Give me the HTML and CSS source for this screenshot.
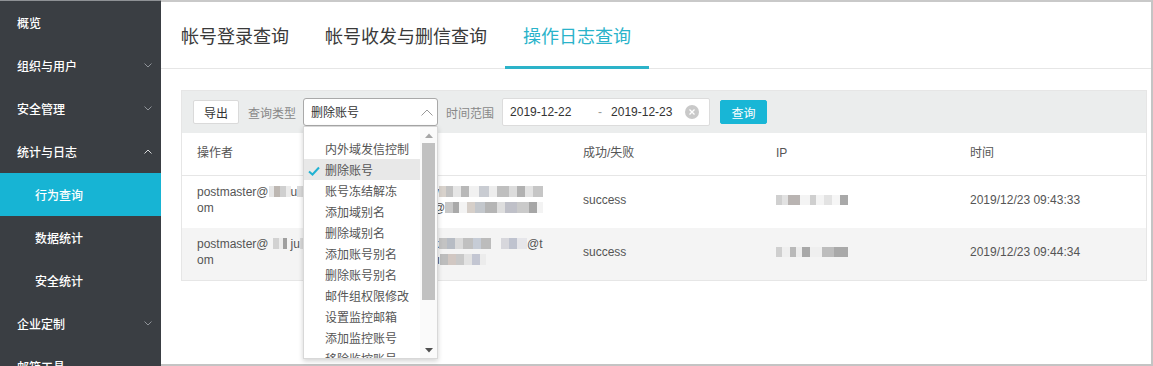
FILE: index.html
```html
<!DOCTYPE html>
<html lang="zh-CN">
<head>
<meta charset="utf-8">
<title>操作日志查询</title>
<link rel="stylesheet" href="styles.css">
</head>
<body>
<div class="app">
  <aside class="sidebar">
    <div class="nav-item">概览</div>
    <div class="nav-item"><span>组织与用户</span><svg class="chev" viewBox="0 0 8 5"><polyline points="0.5,0.5 4,4 7.5,0.5"/></svg></div>
    <div class="nav-item"><span>安全管理</span><svg class="chev" viewBox="0 0 8 5"><polyline points="0.5,0.5 4,4 7.5,0.5"/></svg></div>
    <div class="nav-item"><span>统计与日志</span><svg class="chev chev-open" viewBox="0 0 8 5"><polyline points="0.5,4.5 4,1 7.5,4.5"/></svg></div>
    <div class="nav-item sub active">行为查询</div>
    <div class="nav-item sub">数据统计</div>
    <div class="nav-item sub">安全统计</div>
    <div class="nav-item"><span>企业定制</span><svg class="chev" viewBox="0 0 8 5"><polyline points="0.5,0.5 4,4 7.5,0.5"/></svg></div>
    <div class="nav-item">邮箱工具</div>
  </aside>
  <main class="main">
    <nav class="tabs">
      <div class="tab">帐号登录查询</div>
      <div class="tab">帐号收发与删信查询</div>
      <div class="tab active">操作日志查询</div>
    </nav>
    <section class="panel">
      <div class="toolbar">
        <button class="btn">导出</button>
        <span class="label label-type">查询类型</span>
        <div class="select-wrap">
          <div class="select">
            <span>删除账号</span>
            <svg class="select-arrow" viewBox="0 0 12 7"><polyline points="0.5,6.5 6,1 11.5,6.5"/></svg>
          </div>
          <div class="dropdown">
            <ul class="options">
              <li>内外域发信控制</li>
              <li class="selected"><svg class="check" viewBox="0 0 12 10"><polyline points="1,5.5 4.5,8.5 11,1.5"/></svg>删除账号</li>
              <li>账号冻结解冻</li>
              <li>添加域别名</li>
              <li>删除域别名</li>
              <li>添加账号别名</li>
              <li>删除账号别名</li>
              <li>邮件组权限修改</li>
              <li>设置监控邮箱</li>
              <li>添加监控账号</li>
              <li>移除监控账号</li>
            </ul>
            <div class="scrollbar">
              <div class="sb-btn"><svg viewBox="0 0 8 5" class="sb-up"><polygon points="0,5 4,0.5 8,5"/></svg></div>
              <div class="sb-thumb"></div>
              <div class="sb-space"></div>
              <div class="sb-btn"><svg viewBox="0 0 8 5" class="sb-down"><polygon points="0,0 8,0 4,4.5"/></svg></div>
            </div>
          </div>
        </div>
        <span class="label label-time">时间范围</span>
        <div class="daterange">
          <span class="date-from">2019-12-22</span>
          <span class="date-sep">-</span>
          <span class="date-to">2019-12-23</span>
          <svg class="clear" viewBox="0 0 14 14"><circle cx="7" cy="7" r="7"/><path d="M4.5 4.5 L9.5 9.5 M9.5 4.5 L4.5 9.5"/></svg>
        </div>
        <button class="btn btn-primary">查询</button>
      </div>
      <table class="log-table">
        <colgroup>
          <col class="c1"><col class="c2"><col class="c3"><col class="c4"><col>
        </colgroup>
        <thead>
          <tr><th>操作者</th><th></th><th>成功/失败</th><th>IP</th><th>时间</th></tr>
        </thead>
        <tbody>
          <tr>
            <td class="nowrap">postmaster@<span class="mz mz-a"></span>u<span class="mz mz-b"></span><br>om</td>
            <td class="nowrap">y<span class="mz mz-c"></span><br>@<span class="mz mz-d"></span></td>
            <td>success</td>
            <td><span class="mz mz-ip1"></span></td>
            <td>2019/12/23 09:43:33</td>
          </tr>
          <tr class="alt">
            <td class="nowrap">postmaster@<span class="mz mz-e"></span>ju<span class="mz mz-b"></span><br>om</td>
            <td class="nowrap">k<span class="mz mz-f"></span>@t<br>u<span class="mz mz-g"></span></td>
            <td>success</td>
            <td><span class="mz mz-ip2"></span></td>
            <td>2019/12/23 09:44:34</td>
          </tr>
        </tbody>
      </table>
    </section>
  </main>
</div>
</body>
</html>
```

FILE: styles.css
```css
* { box-sizing: border-box; }
html, body { margin: 0; padding: 0; }
body {
  width: 1153px;
  height: 366px;
  overflow: hidden;
  background: #fff;
  font-family: "Liberation Sans", "Noto Sans CJK SC", sans-serif;
  font-size: 12px;
  color: #555;
}
.app { display: flex; height: 366px; }

/* sidebar */
.sidebar {
  width: 161px;
  flex: none;
  background: #3a3e43;
  border-top: 1px solid #8e9195;
  overflow: hidden;
  font-family: "Noto Sans CJK SC", sans-serif;
  font-size: 12px;
  font-weight: 500;
  color: #fff;
}
.nav-item {
  height: 43px;
  display: flex;
  align-items: center;
  justify-content: space-between;
  padding: 0 9px 0 17px;
}
.nav-item.sub { padding-left: 35px; }
.nav-item.active { background: #17b4d4; }
.chev { width: 8px; height: 5px; fill: none; stroke: #8f9399; stroke-width: 1; }
.chev-open { stroke: #d8dadc; }

/* main */
.main {
  flex: 1;
  min-width: 0;
  border-top: 2px solid #c9c9c9;
  border-right: 2px solid #c4c4c4;
  border-bottom: 2px solid #c4c4c4;
}
.tabs {
  display: flex;
  height: 67px;
  padding-left: 2px;
  border-bottom: 1px solid #e6e6e6;
}
.tab {
  position: relative;
  padding: 0 18px;
  line-height: 66px;
  font-family: "Noto Sans CJK SC", sans-serif;
  font-size: 18px;
  color: #3a3a3a;
}
.tab.active { color: #2ab3ca; }
.tab.active::after {
  content: "";
  position: absolute;
  left: 0;
  right: 0;
  bottom: -1px;
  height: 3px;
  background: #2cb3c9;
}

.panel {
  margin: 21px 4px 0 20px;
  border: 1px solid #e6e6e6;
}
.toolbar {
  height: 42px;
  background: #ebeded;
  display: flex;
  align-items: center;
  padding-left: 11px;
}
.btn {
  height: 24px;
  width: 46px;
  padding: 0;
  border: 1px solid #dadada;
  border-radius: 2px;
  background: #fff;
  font-family: "Noto Sans CJK SC", sans-serif;
  font-size: 12px;
  color: #333;
}
.btn-primary {
  width: 47px;
  margin-left: 10px;
  background: #18b6d6;
  border-color: #18b6d6;
  color: #fff;
}
.label {
  font-family: "Noto Sans CJK SC", sans-serif;
  font-size: 12px;
  color: #888;
}
.label-type { margin: 0 7px 0 9px; }
.label-time { margin: 0 8px; }

.select-wrap { position: relative; }
.select {
  width: 135px;
  height: 28px;
  border: 1px solid #a9a9a9;
  border-radius: 3px;
  background: #fff;
  display: flex;
  align-items: center;
  justify-content: space-between;
  padding: 0 4px 2px 7px;
  font-family: "Noto Sans CJK SC", sans-serif;
  color: #333;
}
.select-arrow { width: 12px; height: 7px; fill: none; stroke: #9a9a9a; stroke-width: 1; margin-top: 3px; }

.dropdown {
  position: absolute;
  top: 28px;
  left: 0;
  z-index: 10;
  width: 135px;
  height: 233px;
  background: #fff;
  border: 1px solid #d8d8d8;
  box-shadow: 0 2px 5px rgba(0, 0, 0, 0.18);
  display: flex;
  overflow: hidden;
}
.options {
  flex: 1;
  list-style: none;
  margin: 0;
  padding: 11px 0 0;
  font-family: "Noto Sans CJK SC", sans-serif;
  font-size: 12px;
  color: #555;
}
.options li {
  position: relative;
  height: 21px;
  line-height: 21px;
  padding-left: 21px;
  white-space: nowrap;
}
.options li.selected { background: #e8e8e8; }
.check {
  position: absolute;
  left: 4px;
  top: 7px;
  width: 12px;
  height: 10px;
  fill: none;
  stroke: #22b2d2;
  stroke-width: 2;
}
.scrollbar {
  width: 17px;
  flex: none;
  display: flex;
  flex-direction: column;
  background: #fafafa;
}
.sb-btn { height: 16px; display: flex; align-items: center; justify-content: center; }
.sb-up { width: 8px; height: 5px; fill: #a6a6a6; }
.sb-down { width: 8px; height: 5px; fill: #505050; }
.sb-thumb { height: 157px; margin: 0 2px; background: #c1c1c1; }
.sb-space { flex: 1; }

.daterange {
  width: 208px;
  height: 28px;
  border: 1px solid #dcdcdc;
  border-radius: 2px;
  background: #fff;
  display: flex;
  align-items: center;
  padding-left: 7px;
  color: #333;
}
.date-from { width: 79px; }
.date-sep { width: 22px; text-align: center; color: #999; }
.date-to { width: 74px; }
.clear { width: 14px; height: 14px; }
.clear circle { fill: #c9c9c9; }
.clear path { stroke: #fff; stroke-width: 1.3; fill: none; }

/* table */
.log-table {
  width: 100%;
  border-collapse: collapse;
  table-layout: fixed;
  background: #fff;
}
.c1 { width: 236px; }
.c2 { width: 150px; }
.c3 { width: 193px; }
.c4 { width: 194px; }
.log-table th {
  text-align: left;
  font-weight: normal;
  color: #555;
  height: 42px;
  padding: 0 15px 1px;
  line-height: 16px;
  border-bottom: 1px solid #e6e6e6;
  font-family: "Liberation Sans", "Noto Sans CJK SC", sans-serif;
}
.log-table td {
  padding: 8px 15px 12px;
  line-height: 16px;
  vertical-align: middle;
  color: #555;
}
.log-table tr.alt td { background: #f4f4f4; }
.nowrap { white-space: nowrap; overflow: hidden; }

/* pixelated (masked) data */
.mz { display: inline-block; height: 11px; vertical-align: -1px; }
.mz-a { width: 22px; background: linear-gradient(90deg, #e6e6e6 0 5px, #bdb7b2 5px 11px, #cfcfcf 11px 17px, #ececec 17px); }
.mz-b { width: 60px; background: linear-gradient(90deg, #d9d9d9 0 8px, #f0f0f0 8px 16px, #c6c6c6 16px 28px, #e4e4e4 28px 40px, #cdcdcd 40px); }
.mz-c { width: 104px; background: linear-gradient(90deg, #d8d2cc 0 7px, #c2c2c2 7px 14px, #e6e6e6 14px 22px, #b8b8b8 22px 30px, #f1f1f1 30px 40px, #c9ccd2 40px 50px, #ededed 50px 58px, #bfbfbf 58px 70px, #dcdcdc 70px 78px, #b1b1b1 78px 86px, #e3e3e3 86px 94px, #c6c6c6 94px); }
.mz-d { width: 98px; background: linear-gradient(90deg, #c8c8c8 0 8px, #a9a9a9 8px 14px, #f3f3f3 14px 22px, #d6cfc9 22px 30px, #c3c7cc 30px 40px, #b5b5b5 40px 52px, #dedede 52px 60px, #bfc0c8 60px 72px, #cacaca 72px 84px, #a6a6a6 84px 92px, #f3f3f3 92px); }
.mz-e { width: 22px; background: linear-gradient(90deg, #f4f4f4 0 4px, #d2d2d2 4px 10px, #ececec 10px 14px, #9f9f9f 14px 18px, #f4f4f4 18px); }
.mz-f { width: 88px; background: linear-gradient(90deg, #c3c3c3 0 8px, #b7bcc4 8px 16px, #dadada 16px 24px, #c0c0c0 24px 34px, #c6ccd6 34px 42px, #bcbcbc 42px 52px, #f4f4f4 52px 62px, #d7d7dc 62px 70px, #bfc3cf 70px 78px, #e6e6ea 78px); }
.mz-g { width: 46px; background: linear-gradient(90deg, #bdbdbd 0 8px, #d1c7c2 8px 16px, #c8c8c8 16px 24px, #e2e2e2 24px 32px, #c3c6d2 32px 40px, #ececec 40px); }
.mz-ip1 { width: 72px; height: 10px; background: linear-gradient(90deg, #d0d0d0 0 6px, #e2e2e2 6px 12px, #b9b4b2 12px 24px, #f4f4f4 24px 34px, #cfcfcf 34px 40px, #f4f4f4 40px 48px, #e3e3e3 48px 56px, #f6f6f6 56px 64px, #a9a9a9 64px 72px); }
.mz-ip2 { width: 72px; height: 10px; background: linear-gradient(90deg, #cfcfcf 0 6px, #efefef 6px 14px, #b9b9b9 14px 20px, #ededed 20px 26px, #a8a8a8 26px 34px, #efefef 34px 46px, #bdbdbd 46px 58px, #a9a9a9 58px 72px); }
```
